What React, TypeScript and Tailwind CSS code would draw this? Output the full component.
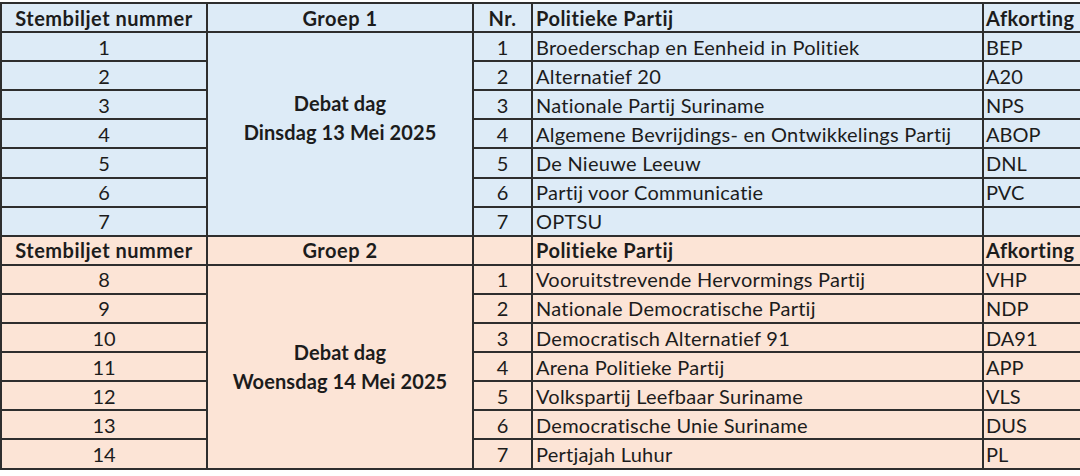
import React from 'react'

type Row = { nr: number; party: string; abbr: string }

const group1: Row[] = [
  { nr: 1, party: 'Broederschap en Eenheid in Politiek', abbr: 'BEP' },
  { nr: 2, party: 'Alternatief 20', abbr: 'A20' },
  { nr: 3, party: 'Nationale Partij Suriname', abbr: 'NPS' },
  { nr: 4, party: 'Algemene Bevrijdings- en Ontwikkelings Partij', abbr: 'ABOP' },
  { nr: 5, party: 'De Nieuwe Leeuw', abbr: 'DNL' },
  { nr: 6, party: 'Partij voor Communicatie', abbr: 'PVC' },
  { nr: 7, party: 'OPTSU', abbr: '' },
]

const group2: Row[] = [
  { nr: 1, party: 'Vooruitstrevende Hervormings Partij', abbr: 'VHP' },
  { nr: 2, party: 'Nationale Democratische Partij', abbr: 'NDP' },
  { nr: 3, party: 'Democratisch Alternatief 91', abbr: 'DA91' },
  { nr: 4, party: 'Arena Politieke Partij', abbr: 'APP' },
  { nr: 5, party: 'Volkspartij Leefbaar Suriname', abbr: 'VLS' },
  { nr: 6, party: 'Democratische Unie Suriname', abbr: 'DUS' },
  { nr: 7, party: 'Pertjajah Luhur', abbr: 'PL' },
]

const cell = 'border-r-2 border-b-2 border-[#2e2e2e] flex items-center whitespace-nowrap'
const bold = 'font-bold tracking-[0.5px]'

function Group({
  rows,
  start,
  title,
  nrHeader,
  day,
  bg,
  dayPad,
}: {
  rows: Row[]
  start: number
  title: string
  nrHeader: string
  day: string
  bg: string
  dayPad: string
}) {
  return (
    <>
      <div className={`${cell} ${bg} ${bold} justify-center`}>Stembiljet nummer</div>
      <div className={`${cell} ${bg} ${bold} justify-center`}>{title}</div>
      <div className={`${cell} ${bg} ${bold} justify-center`}>{nrHeader}</div>
      <div className={`${cell} ${bg} ${bold} pl-[3px]`}>Politieke Partij</div>
      <div className={`${cell} ${bg} ${bold} pl-[2px]`}>Afkorting</div>
      {rows.map((r, i) => (
        <React.Fragment key={r.nr}>
          <div className={`${cell} ${bg} justify-center`}>{start + i}</div>
          {i === 0 && (
            <div
              className={`${cell} ${bg} row-span-7 flex-col justify-center text-center font-bold tracking-[0.1px] leading-[29px] ${dayPad}`}
            >
              <div>Debat dag</div>
              <div>{day}</div>
            </div>
          )}
          <div className={`${cell} ${bg} justify-center`}>{r.nr}</div>
          <div className={`${cell} ${bg} pl-[3px] tracking-[0.25px]`}>{r.party}</div>
          <div className={`${cell} ${bg} pl-[2px]`}>{r.abbr}</div>
        </React.Fragment>
      ))}
    </>
  )
}

export default function App() {
  return (
    <div className="w-[1080px] h-[476px] bg-white overflow-hidden pt-[2px]">
      <div
        className="grid grid-cols-[206px_266px_59px_451px_110px] auto-rows-[29.1px] border-t-2 border-l-2 border-[#2e2e2e] text-[20px] text-[#1c1c1c] w-[1092px]"
        style={{ fontFamily: 'Lato, "Open Sans", sans-serif' }}
      >
        <Group
          rows={group1}
          start={1}
          title="Groep 1"
          nrHeader="Nr."
          day="Dinsdag 13 Mei 2025"
          bg="bg-[#ddebf7]"
          dayPad="pb-[32px]"
        />
        <Group
          rows={group2}
          start={8}
          title="Groep 2"
          nrHeader=""
          day="Woensdag 14 Mei 2025"
          bg="bg-[#fce4d6]"
          dayPad="pb-0"
        />
      </div>
    </div>
  )
}
